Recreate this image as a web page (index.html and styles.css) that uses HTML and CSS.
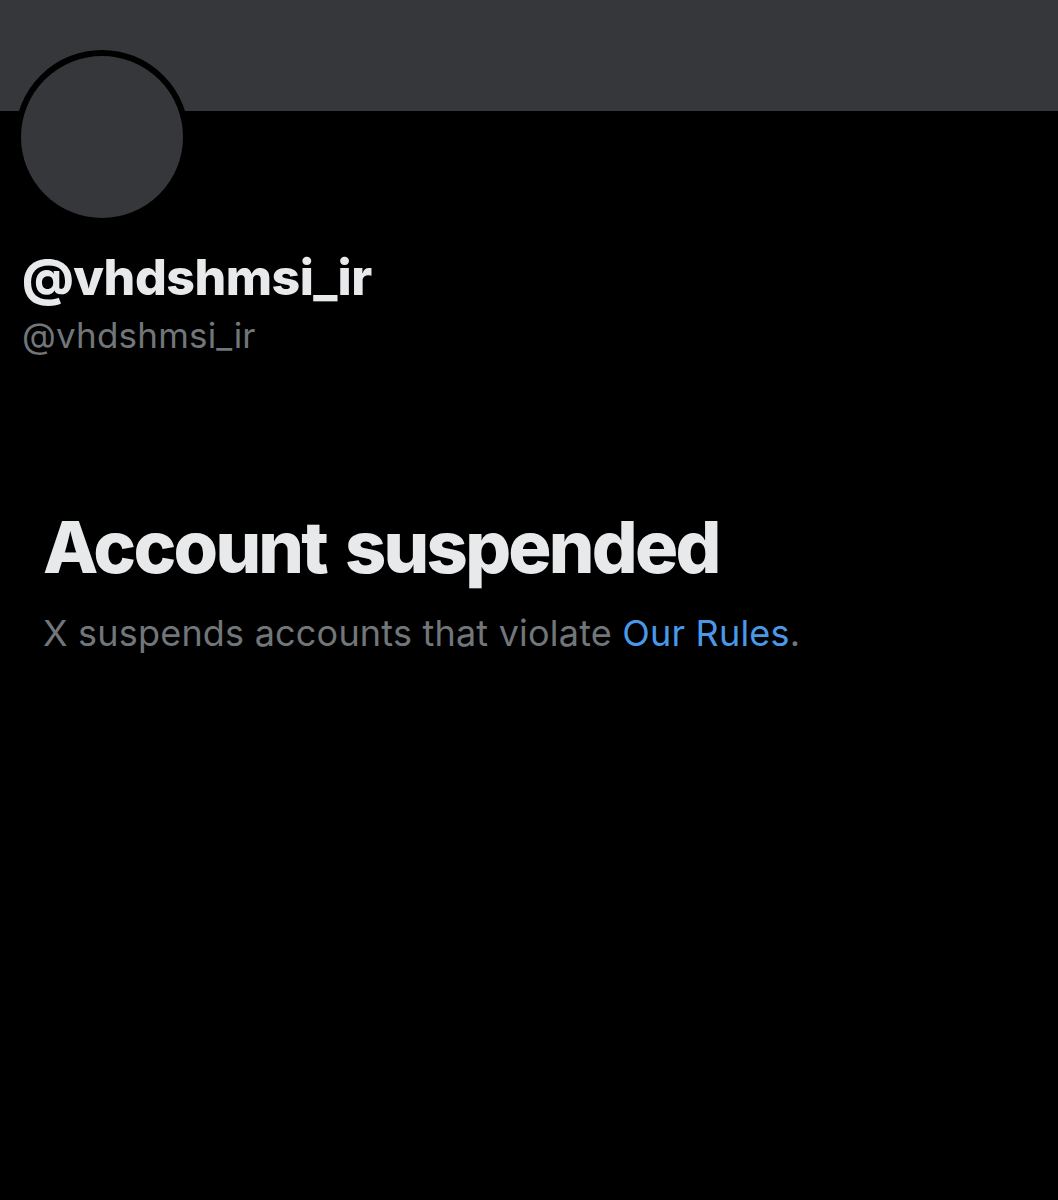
FILE: index.html
```html
<!DOCTYPE html>
<html>
<head>
<meta charset="utf-8">
<link rel="stylesheet" href="styles.css">
</head>
<body>
<div class="page">
  <div class="banner"></div>
  <div class="profile">
    <div class="avatar-row">
      <div class="avatar"></div>
    </div>
    <div class="name">@vhdshmsi_ir</div>
    <div class="handle">@vhdshmsi_ir</div>
  </div>
  <div class="notice">
    <h1 class="title">Account suspended</h1>
    <p class="desc">X suspends accounts that violate <a class="link" href="#">Our Rules</a>.</p>
  </div>
</div>
</body>
</html>
```
FILE: styles.css
```css
html, body {
  margin: 0;
  padding: 0;
  background: #000;
}
body {
  font-family: Inter, "Liberation Sans", sans-serif;
  color: #e7e9ea;
  width: 1058px;
  height: 1200px;
  overflow: hidden;
}
.banner {
  height: 111px;
  background: #36373b;
}
.profile {
  padding-left: 15px;
}
.avatar-row {
  margin-top: -61px;
  height: 173px;
}
.avatar {
  width: 162px;
  height: 162px;
  border-radius: 50%;
  background: #36373b;
  border: 6px solid #000;
}
.name {
  margin-top: 24px;
  padding-left: 7px;
  font-size: 50px;
  font-weight: 800;
  line-height: 60px;
  letter-spacing: -0.5px;
  color: #e7e9ea;
}
.handle {
  margin-top: 7px;
  padding-left: 7px;
  font-size: 35px;
  line-height: 42px;
  letter-spacing: 0.2px;
  color: #71767b;
}
.notice {
  padding-left: 43px;
  margin-top: 151px;
}
.title {
  margin: 0;
  font-size: 72px;
  font-weight: 800;
  line-height: 80px;
  letter-spacing: -2.75px;
  word-spacing: 6px;
  color: #e7e9ea;
}
.desc {
  margin: 24px 0 0;
  font-size: 36px;
  line-height: 44px;
  letter-spacing: 0.2px;
  color: #71767b;
}
.link {
  color: #4a99e9;
  text-decoration: none;
}
```
